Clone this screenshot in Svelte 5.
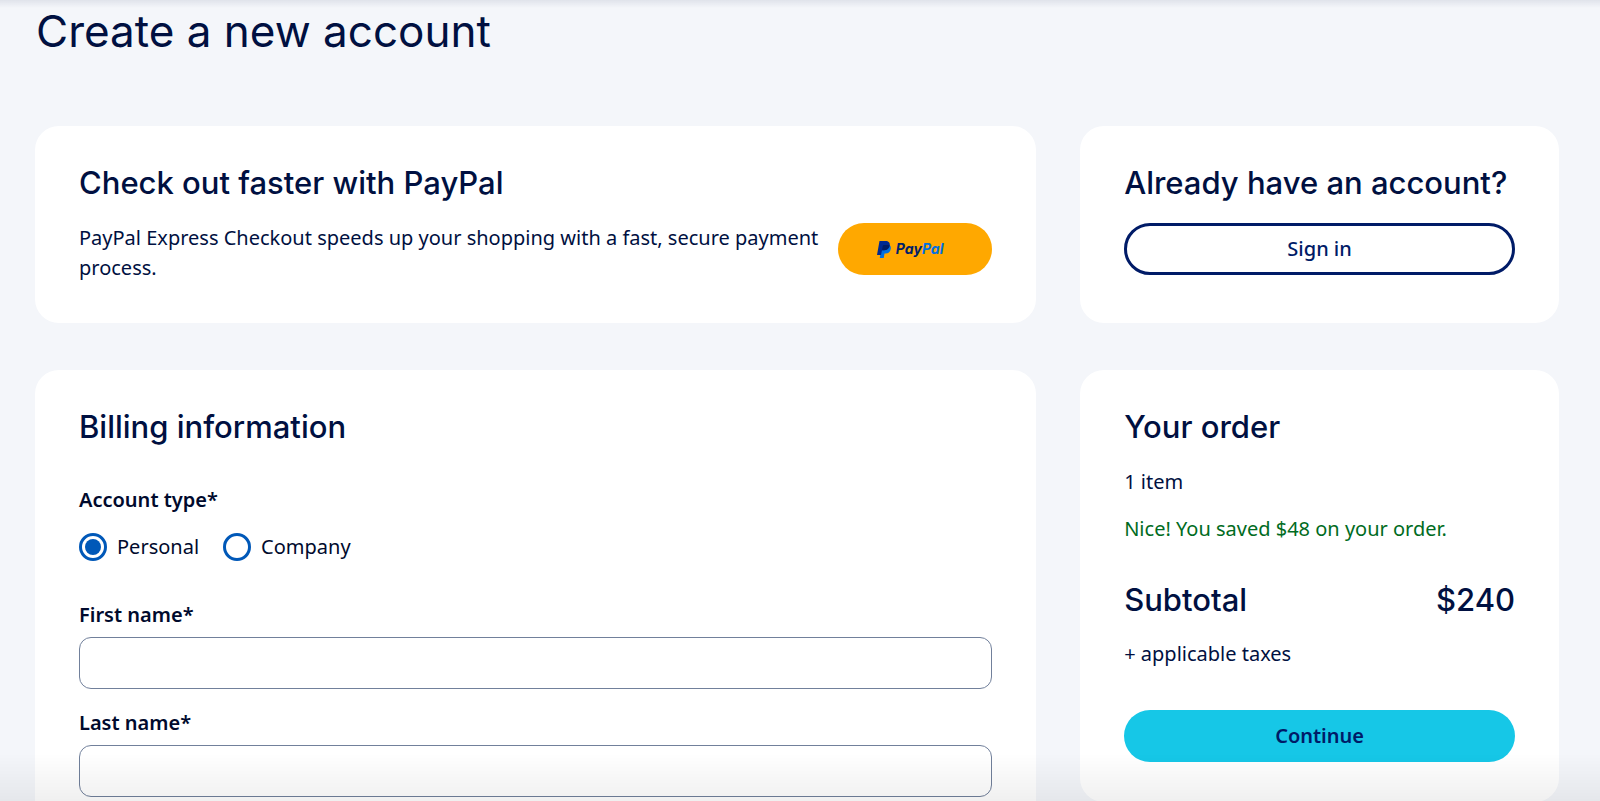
<script>
  let accountType = $state('personal');
  let firstName = $state('');
  let lastName = $state('');
</script>

<div class="page">
  <h1>Create a new account</h1>

  <main class="grid">
    <section class="card">
      <h2>Check out faster with PayPal</h2>
      <div class="express">
        <p>PayPal Express Checkout speeds up your shopping with a fast, secure payment process.</p>
        <button class="btn paypal" type="button" aria-label="PayPal">
          <svg class="mark" viewBox="0 0 28 34" aria-hidden="true">
            <path fill="#0070e0" d="M24 7c3 2 4.300 5 3.500 9C26.300 22 22.500 25 17 25h-2L13.500 34H5.500L9.500 12z" />
            <path fill="#002991" d="M5 0h12c6 0 9.500 3.500 8.500 9-1 6.500-5.500 9.500-12 9.500H10L8 28H0z" />
            <path fill="#001c64" d="M10 18.500 11.500 10c.3-1.300 1-2 2.500-2h7c2 0 3.500.4 4.500 1-1 6.500-5.500 9.500-12 9.500z" />
          </svg>
          <span class="wordmark"><span class="pay">Pay</span><span class="pal">Pal</span></span>
        </button>
      </div>
    </section>

    <section class="card">
      <h2>Already have an account?</h2>
      <button class="btn outline" type="button">Sign in</button>
    </section>

    <section class="card">
      <h2>Billing information</h2>
      <form>
        <fieldset>
          <legend>Account type*</legend>
          <div class="options">
            <label><input type="radio" name="account-type" value="personal" bind:group={accountType} />Personal</label>
            <label><input type="radio" name="account-type" value="company" bind:group={accountType} />Company</label>
          </div>
        </fieldset>
        <div class="field">
          <label for="first-name">First name*</label>
          <input id="first-name" type="text" bind:value={firstName} />
        </div>
        <div class="field">
          <label for="last-name">Last name*</label>
          <input id="last-name" type="text" bind:value={lastName} />
        </div>
      </form>
    </section>

    <section class="card order">
      <h2>Your order</h2>
      <p>1 item</p>
      <p class="saved">Nice! You saved $48 on your order.</p>
      <div class="subtotal">
        <h2>Subtotal</h2>
        <strong>$240</strong>
      </div>
      <p>+ applicable taxes</p>
      <button class="btn primary" type="button">Continue</button>
    </section>
  </main>
</div>

<style>
  :global(body) {
    margin: 0;
    background: #f4f6fa;
  }

  .page {
    box-sizing: border-box;
    padding: 1px 41px 48px 35px;
    color: #001041;
    font-family: 'Noto Sans', 'Open Sans', sans-serif;
    font-size: 20px;
    line-height: 30px;
  }

  /* Soft shades along the top and bottom edges of the viewport */
  .page::before,
  .page::after {
    content: '';
    position: fixed;
    left: 0;
    right: 0;
    pointer-events: none;
  }

  .page::before {
    top: 0;
    height: 8px;
    background: linear-gradient(rgba(0, 16, 65, 0.08), rgba(0, 16, 65, 0));
  }

  .page::after {
    bottom: 0;
    height: 48px;
    background: linear-gradient(rgba(0, 0, 0, 0), rgba(0, 0, 0, 0.06));
  }

  h1,
  h2,
  p {
    margin: 0;
  }

  h1,
  h2,
  .subtotal strong {
    font-family: Inter, Roboto, sans-serif;
  }

  h1 {
    padding: 0 1px 65px;
    font-size: 44px;
    font-weight: 400;
    line-height: 60px;
  }

  h2,
  .subtotal strong {
    font-size: 31px;
    font-weight: 500;
    line-height: 40px;
  }

  .grid {
    display: grid;
    grid-template-columns: minmax(0, 23fr) minmax(0, 11fr);
    gap: 47px 44px;
    align-items: start;
  }

  .card {
    box-sizing: border-box;
    height: 100%;
    padding: 37px 44px 40px;
    border-radius: 24px;
    background: #fff;
  }

  .card.order {
    height: auto;
  }

  .card > h2 {
    margin-bottom: 20px;
  }

  .express {
    display: flex;
    align-items: flex-start;
    gap: 4px;
  }

  .express p {
    flex: 1;
  }

  .btn {
    display: flex;
    align-items: center;
    justify-content: center;
    box-sizing: border-box;
    width: 100%;
    height: 52px;
    padding: 0;
    border: 0;
    border-radius: 26px;
    color: #001b67;
    font: inherit;
    font-weight: 600;
    cursor: pointer;
  }

  .outline {
    border: 3px solid #001b67;
    background: #fff;
    font-weight: 500;
  }

  .primary {
    margin-top: 41px;
    background: #16c7e7;
  }

  .paypal {
    flex: none;
    gap: 5px;
    width: 154px;
    padding-right: 10px;
    background: #ffa800;
  }

  .mark {
    width: 14px;
    height: 17px;
  }

  .wordmark {
    font-family: Inter, sans-serif;
    font-size: 14px;
    font-style: italic;
    font-weight: 700;
    line-height: 20px;
  }

  .pay {
    color: #002069;
  }

  .pal {
    color: #0070e0;
  }

  fieldset {
    margin: 0;
    padding: 0;
    border: 0;
  }

  form {
    padding-top: 18px;
    color: #000a2d;
  }

  legend,
  .field label {
    display: block;
    padding: 0;
    font-weight: 600;
  }

  .options {
    display: flex;
    gap: 24px;
    margin: 17px 0 38px;
  }

  .options label {
    display: flex;
    align-items: center;
    gap: 10px;
  }

  .options input {
    appearance: none;
    box-sizing: border-box;
    width: 28px;
    height: 28px;
    margin: 0;
    border: 3px solid #0058b8;
    border-radius: 50%;
    background: #fff;
  }

  .options input:checked {
    padding: 3px;
    background: #0058b8 content-box;
  }

  .field + .field {
    margin-top: 19px;
  }

  .field input {
    display: block;
    box-sizing: border-box;
    width: 100%;
    height: 52px;
    margin-top: 7px;
    padding: 0 16px;
    border: 1px solid #71809b;
    border-radius: 12px;
    background: #fff;
    color: inherit;
    font: inherit;
  }

  .saved {
    margin-top: 17px;
    color: #006b22;
  }

  .subtotal {
    display: flex;
    justify-content: space-between;
    margin: 36px 0 19px;
  }
</style>
